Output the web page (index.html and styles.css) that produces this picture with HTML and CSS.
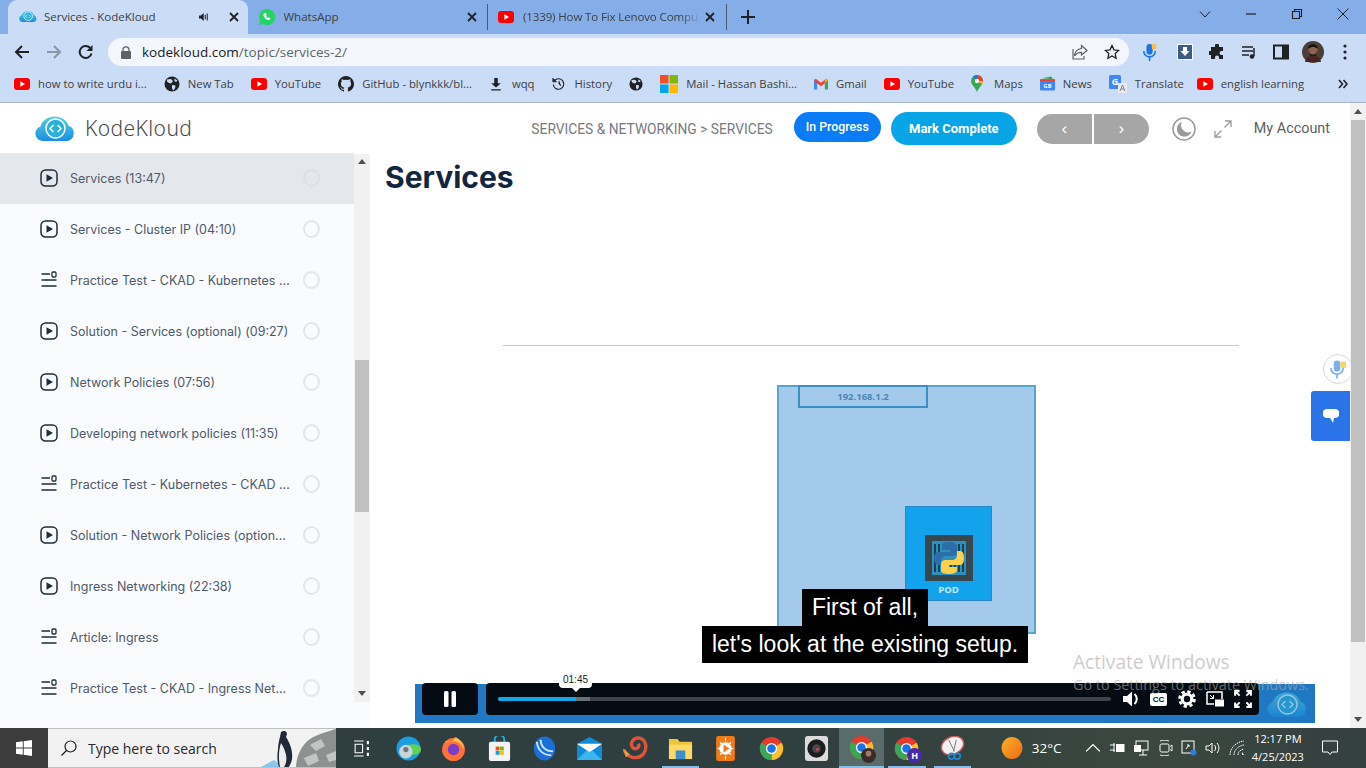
FILE: index.html
```html
<!DOCTYPE html>
<html lang="en">
<head>
<meta charset="utf-8">
<title>Services - KodeKloud</title>
<link rel="stylesheet" href="styles.css">
</head>
<body>
<svg class="defs" width="0" height="0" aria-hidden="true">
  <defs>
    <linearGradient id="cloudg" x1="0" y1="0" x2="0" y2="1"><stop offset="0" stop-color="#55d3dc"/><stop offset="1" stop-color="#1a8ee2"/></linearGradient>
    <symbol id="yt" viewBox="0 0 16 16"><rect x="0" y="2" width="16" height="12" rx="3" fill="#f00"/><path d="M6.4 5.2 11 8l-4.600 2.800z" fill="#fff"/></symbol>
    <symbol id="globe" viewBox="0 0 16 16"><circle cx="8" cy="8" r="7.500" fill="#202124"/><path d="M3 3.500 7 3l2 2-2 2.500L4.500 6.800 3 5.500zM8 9l3.500.5L11 12.500l-2 2-1-2.500zM10.500 2.500l3 2-1.500 1.500-1.500-1z" fill="#cbdcf6"/></symbol>
    <symbol id="play" viewBox="0 0 18 18"><rect x="1" y="1" width="16" height="16" rx="4.500" fill="none" stroke="#1f2d3d" stroke-width="1.500"/><path d="M6.500 5.200 13 9l-6.500 3.800z" fill="#1f2d3d"/></symbol>
    <symbol id="lines" viewBox="0 0 18 18"><path d="M1.500 3h8.500M1.500 9h15M1.500 15h15" fill="none" stroke="#1f2d3d" stroke-width="1.300"/><rect x="12" y="1" width="4" height="5" rx="1" fill="none" stroke="#1f2d3d" stroke-width="1.300"/></symbol>
    <symbol id="chrome" viewBox="0 0 28 28"><circle cx="14" cy="14" r="13" fill="#e33b2e"/><path d="M14 14 25.300 7.500A13 13 0 0 1 14 27z" fill="#fbc02d"/><path d="M14 14 14 27A13 13 0 0 1 2.700 7.500z" fill="#3aa757"/><circle cx="14" cy="14" r="6.200" fill="#fff"/><circle cx="14" cy="14" r="4.800" fill="#1a73e8"/></symbol>
    <symbol id="cloud" viewBox="0 0 40 26"><path d="M8 25a7.500 7.500 0 0 1-2.500-14.600C7 4.500 13 .5 20 .5c6 0 11.500 3.500 13.300 9A8 8 0 0 1 32 25z" fill="url(#cloudg)"/><circle cx="20.500" cy="12.500" r="9.500" fill="#2cb0dc" stroke="#fff" stroke-width="1.500"/><path d="m18.500 9-3.500 3.500 3.500 3.500M22.500 9l3.500 3.500-3.500 3.500" fill="none" stroke="#fff" stroke-width="1.400"/></symbol>
  </defs>
</svg>

<header class="tabstrip">
  <div class="tab tab-active">
    <svg class="fav" viewBox="0 0 40 26"><use href="#cloud"/></svg>
    <span class="tab-title">Services - KodeKloud</span>
    <svg class="tab-audio" viewBox="0 0 14 12"><path d="M0 4h2.500L6 1v10L2.500 8H0z" fill="#202124"/><path d="M8 3v6M10.500 1.500v9" stroke="#202124" stroke-width="1.300"/></svg>
    <svg class="tab-x" viewBox="0 0 10 10"><path d="m1 1 8 8M9 1 1 9" stroke="#202124" stroke-width="1.800"/></svg>
  </div>
  <div class="tab">
    <svg class="fav fav-big" viewBox="0 0 18 18"><path d="M9 1a8 8 0 0 0-6.900 12L1 17l4.200-1.100A8 8 0 1 0 9 1z" fill="#25d366"/><path d="M6.300 5c-1.500 1-1 3 .8 5s3.600 2.600 4.900 1.500l.5-1.300-2-1-.8.800C9.400 9.600 8.400 8.600 8 7.500l.7-.8-.9-2z" fill="#fff"/></svg>
    <span class="tab-title">WhatsApp</span>
    <svg class="tab-x tab-x-solo" viewBox="0 0 10 10"><path d="m1 1 8 8M9 1 1 9" stroke="#202124" stroke-width="1.800"/></svg>
  </div>
  <div class="tab tab-sep">
    <svg class="fav fav-yt"><use href="#yt"/></svg>
    <span class="tab-title tab-fade">(1339) How To Fix Lenovo Compu</span>
    <svg class="tab-x tab-x-fade" viewBox="0 0 10 10"><path d="m1 1 8 8M9 1 1 9" stroke="#202124" stroke-width="1.800"/></svg>
  </div>
  <svg class="tab-plus" viewBox="0 0 14 14"><path d="M7 0v14M0 7h14" stroke="#202124" stroke-width="2"/></svg>
  <div class="winctl">
    <svg viewBox="0 0 12 12"><path d="m1 3.500 5 5.500 5-5.500" fill="none" stroke="#202124"/></svg>
    <svg viewBox="0 0 12 12"><path d="M1 6h10" stroke="#202124" stroke-width="1.200"/></svg>
    <svg viewBox="0 0 12 12"><path d="M1.500 3.500h7v7h-7zM3.500 3.500v-2h7v7h-2" fill="none" stroke="#202124" stroke-width="1.100"/></svg>
    <svg viewBox="0 0 12 12"><path d="m.5.500 11 11M11.500.500l-11 11" stroke="#202124"/></svg>
  </div>
</header>

<nav class="toolbar">
  <svg class="nav-ico" viewBox="0 0 16 16"><path d="M15 8H2M8 2 2 8l6 6" fill="none" stroke="#202124" stroke-width="2"/></svg>
  <svg class="nav-ico" viewBox="0 0 16 16"><path d="M1 8h13M8 2l6 6-6 6" fill="none" stroke="#8a95a5" stroke-width="2"/></svg>
  <svg class="nav-ico" viewBox="0 0 16 16"><path d="M13.500 9.500A6 6 0 1 1 12 3.800" fill="none" stroke="#202124" stroke-width="2"/><path d="M14.500 1v6h-6z" fill="#202124"/></svg>
  <div class="omnibox">
    <svg class="lock" viewBox="0 0 10 13"><path d="M2 5.500V3.800a3 3 0 0 1 6 0v1.700" fill="none" stroke="#5f6368" stroke-width="1.300"/><rect y="5" width="10" height="8" rx="1" fill="#5f6368"/></svg>
    <span class="url">kodekloud.com<span class="url-path">/topic/services-2/</span></span>
    <svg class="omni-ico" viewBox="0 0 16 16"><path d="M9.500 1.500 15 6.500 9.500 11V8.300C6 8.300 4 9.500 2.500 12c.3-4 2.700-7 7-7.500z" fill="none" stroke="#5f6368" stroke-width="1.200"/><path d="M1 5v10h11v-3" fill="none" stroke="#5f6368" stroke-width="1.200"/></svg>
    <svg class="omni-ico omni-last" viewBox="0 0 16 16"><path d="m8 1.500 2 4.300 4.700.6-3.500 3.200.9 4.700L8 12l-4.100 2.300.9-4.700L1.300 6.400 6 5.800z" fill="none" stroke="#202124" stroke-width="1.300"/></svg>
  </div>
  <svg class="ext ext-mic" viewBox="0 0 18 20"><rect x="5" y="1" width="7" height="12" rx="3.500" fill="#1a73e8"/><path d="M2 9a6.500 6.500 0 0 0 13 0M8.500 15.500V20" fill="none" stroke="#1a73e8" stroke-width="1.800"/><rect x="11" y="1" width="5" height="6" rx="1.500" fill="#fbc02d"/></svg>
  <svg class="ext ext-first" viewBox="0 0 16 16"><rect x=".5" y=".5" width="15" height="15" fill="#3c5a8a" stroke="#fff"/><path d="M6 3h4v4h2.500L8 12 3.500 7H6z" fill="#fff"/></svg>
  <svg class="ext" viewBox="0 0 16 16"><path d="M6 1.500a2 2 0 0 1 4 0V3h4v4h-1.500a2 2 0 0 0 0 4H14v4h-4v-1.500a2 2 0 0 0-4 0V15H2v-4H.5a2 2 0 0 1 0-4H2V3h4z" fill="#202124"/></svg>
  <svg class="ext" viewBox="0 0 16 16"><path d="M1 3h11M1 7h11M1 11h7" stroke="#202124" stroke-width="1.500"/><path d="M13 4v8" stroke="#202124" stroke-width="1.500"/><circle cx="11" cy="12.500" r="2.300" fill="#202124"/></svg>
  <svg class="ext" viewBox="0 0 16 16"><rect x="1" y="1.500" width="14" height="13" fill="none" stroke="#202124" stroke-width="2"/><rect x="9" y="1.500" width="6" height="13" fill="#202124"/></svg>
  <svg class="avatar" viewBox="0 0 22 22"><circle cx="11" cy="11" r="11" fill="#4a4038"/><circle cx="11" cy="9" r="4.500" fill="#8a6450"/><path d="M6 7c1-5 9-5 10 0l-1 .5c-2-2-6-2-8 0z" fill="#17110e"/><path d="M7 10c1 5 7 5 8 0l-1 5H8z" fill="#251a16"/><path d="M3 21c1-5 4-6 8-6s7 1 8 6z" fill="#4a2423"/></svg>
  <svg class="ext ext-menu" viewBox="0 0 4 16"><circle cx="2" cy="2" r="1.600" fill="#202124"/><circle cx="2" cy="8" r="1.600" fill="#202124"/><circle cx="2" cy="14" r="1.600" fill="#202124"/></svg>
</nav>

<div class="bookmarks">
  <span class="bm"><svg class="bm-ico"><use href="#yt"/></svg>how to write urdu i...</span>
  <span class="bm"><svg class="bm-ico"><use href="#globe"/></svg>New Tab</span>
  <span class="bm"><svg class="bm-ico"><use href="#yt"/></svg>YouTube</span>
  <span class="bm"><svg class="bm-ico" viewBox="0 0 16 16"><path d="M8 0a8 8 0 0 0-2.500 15.600c.4 0 .5-.2.500-.4v-1.400c-2.200.5-2.700-1-2.700-1-.4-1-.9-1.200-.9-1.200-.7-.5 0-.5 0-.5.800 0 1.200.8 1.200.8.700 1.200 1.900.9 2.400.7 0-.5.300-.9.500-1.100-1.800-.2-3.600-.9-3.600-4 0-.9.300-1.600.8-2.100 0-.2-.4-1 .1-2.100 0 0 .7-.2 2.200.8a7.500 7.500 0 0 1 4 0c1.500-1 2.200-.8 2.200-.8.400 1.100.2 1.900.1 2.100.5.500.8 1.200.8 2.100 0 3.100-1.900 3.800-3.600 4 .3.200.5.700.5 1.500v2.200c0 .2.100.4.500.4A8 8 0 0 0 8 0z" fill="#202124"/></svg>GitHub - blynkkk/bl...</span>
  <span class="bm bm-tight"><svg class="bm-ico bm-small" viewBox="0 0 14 16"><path d="M5 1h4v6h3.500L7 12 1.500 7H5zM1.500 14h11v1.500h-11z" fill="#202124"/></svg>wqq</span>
  <span class="bm bm-tight"><svg class="bm-ico bm-small" viewBox="0 0 16 16"><path d="M3 4a6 6 0 1 1-1.500 4.500" fill="none" stroke="#202124" stroke-width="1.300"/><path d="M1 1.500v4h4zM8 4.500V8l2.500 2" fill="#202124" stroke="#202124"/></svg>History</span>
  <span class="bm"><svg class="bm-ico bm-small"><use href="#globe"/></svg></span>
  <span class="bm"><svg class="bm-ico bm-ms" viewBox="0 0 18 18"><rect width="8.500" height="8.500" fill="#f25022"/><rect x="9.500" width="8.500" height="8.500" fill="#7fba00"/><rect y="9.500" width="8.500" height="8.500" fill="#00a4ef"/><rect x="9.500" y="9.500" width="8.500" height="8.500" fill="#ffb900"/></svg>Mail - Hassan Bashi...</span>
  <span class="bm"><svg class="bm-ico bm-small" viewBox="0 0 16 12"><path d="M0 1.500V12h3.500V5L8 8.500 12.500 5v7H16V1.500L14 0 8 4.500 2 0z" fill="#ea4335"/><path d="M0 1.500V12h3.500V5z" fill="#4285f4"/><path d="M12.500 5v7H16V1.500z" fill="#34a853"/><path d="m14 0 2 1.500-3.500 3.500V2z" fill="#fbbc04"/></svg>Gmail</span>
  <span class="bm"><svg class="bm-ico"><use href="#yt"/></svg>YouTube</span>
  <span class="bm bm-maps"><svg class="bm-ico bm-map" viewBox="0 0 12 17"><path d="M6 0a6 6 0 0 1 6 6c0 3.500-4 6-6 11C4 12 0 9.500 0 6a6 6 0 0 1 6-6z" fill="#34a853"/><path d="M2 1.500A6 6 0 0 1 6 0v6z" fill="#1a73e8"/><path d="M6 0a6 6 0 0 1 6 6H6z" fill="#ea4335"/><path d="M12 6c0 1-.5 2-1 3L6 6z" fill="#fbbc04"/><circle cx="6" cy="6" r="2.200" fill="#fff"/></svg>Maps</span>
  <span class="bm"><svg class="bm-ico bm-news" viewBox="0 0 16 15"><path d="M2 2 12 0l2 3z" fill="#34a853"/><rect y="3" width="16" height="12" rx="1.500" fill="#4285f4"/><rect x="0" y="3" width="16" height="2.500" fill="#ea4335"/><text x="8" y="12.500" class="news-txt">GB</text></svg>News</span>
  <span class="bm bm-translate"><svg class="bm-ico bm-tr" viewBox="0 0 18 18"><rect width="12" height="14" rx="1.500" fill="#4285f4"/><text x="6" y="10" class="tr-txt">G</text><path d="M9 8h9v10H9z" fill="#e8eaed"/><path d="m11 16 2.500-6 2.500 6M12 14h3" fill="none" stroke="#80868b"/></svg>Translate</span>
  <span class="bm"><svg class="bm-ico"><use href="#yt"/></svg>english learning</span>
  <svg class="bm-more" viewBox="0 0 10 10"><path d="m1 1 3.500 4L1 9M5.500 1 9 5 5.500 9" fill="none" stroke="#202124" stroke-width="1.600"/></svg>
</div>

<div class="app">
  <div class="app-main">
    <div class="site-head">
      <svg class="logo"><use href="#cloud"/></svg>
      <span class="brand">KodeKloud</span>
      <span class="crumb">SERVICES &amp; NETWORKING &gt; SERVICES</span>
      <button class="btn-progress">In Progress</button>
      <button class="btn-complete">Mark Complete</button>
      <div class="pager">
        <span class="page-btn">&#8249;</span>
        <span class="page-btn">&#8250;</span>
      </div>
      <svg class="moon" viewBox="0 0 24 24"><circle cx="12" cy="12" r="11" fill="none" stroke="#9a9a9a" stroke-width="1.500"/><path d="M10 5a7.500 7.500 0 1 0 9.500 9.500A7 7 0 0 1 10 5z" fill="#9a9a9a"/></svg>
      <svg class="expand" viewBox="0 0 18 18"><path d="M11 1h6v6M17 1 10.500 7.500M7 17H1v-6M1 17l6.500-6.500" fill="none" stroke="#9a9a9a" stroke-width="1.300"/></svg>
      <span class="account">My Account</span>
    </div>
    <div class="body-row">
      <aside class="sidebar">
        <div class="lessons">
          <div class="lesson lesson-current"><svg class="l-ico"><use href="#play"/></svg><span class="l-name">Services (13:47)</span><i class="radio"></i></div>
          <div class="lesson"><svg class="l-ico"><use href="#play"/></svg><span class="l-name">Services - Cluster IP (04:10)</span><i class="radio"></i></div>
          <div class="lesson"><svg class="l-ico"><use href="#lines"/></svg><span class="l-name">Practice Test - CKAD - Kubernetes ...</span><i class="radio"></i></div>
          <div class="lesson"><svg class="l-ico"><use href="#play"/></svg><span class="l-name">Solution - Services (optional) (09:27)</span><i class="radio"></i></div>
          <div class="lesson"><svg class="l-ico"><use href="#play"/></svg><span class="l-name">Network Policies (07:56)</span><i class="radio"></i></div>
          <div class="lesson"><svg class="l-ico"><use href="#play"/></svg><span class="l-name">Developing network policies (11:35)</span><i class="radio"></i></div>
          <div class="lesson"><svg class="l-ico"><use href="#lines"/></svg><span class="l-name">Practice Test - Kubernetes - CKAD ...</span><i class="radio"></i></div>
          <div class="lesson"><svg class="l-ico"><use href="#play"/></svg><span class="l-name">Solution - Network Policies (option...</span><i class="radio"></i></div>
          <div class="lesson"><svg class="l-ico"><use href="#play"/></svg><span class="l-name">Ingress Networking (22:38)</span><i class="radio"></i></div>
          <div class="lesson"><svg class="l-ico"><use href="#lines"/></svg><span class="l-name">Article: Ingress</span><i class="radio"></i></div>
          <div class="lesson"><svg class="l-ico"><use href="#lines"/></svg><span class="l-name">Practice Test - CKAD - Ingress Net...</span><i class="radio"></i></div>
        </div>
        <div class="side-scroll">
          <div class="track">
            <span class="arr-up"></span>
            <span class="thumb"></span>
            <span class="arr-down"></span>
          </div>
        </div>
      </aside>
      <main class="content">
        <h1 class="title">Services</h1>
        <div class="video">
          <hr class="slide-rule">
          <div class="node-box">
            <div class="ip-box">192.168.1.2</div>
            <div class="pod">
              <svg class="py" viewBox="0 0 48 46">
                <rect width="48" height="46" fill="#37474f"/>
                <rect x="7" y="6" width="34" height="34" fill="#2c91bd"/>
                <path d="M10 9v28M14 9v28M34 9v28M38 9v28M18 30v7M22 30v7M26 30v7M30 30v7M18 9v5M30 9v5" stroke="#16384a" stroke-width="1.800"/>
                <path d="M24 7c-6 0-7 2-7 4v4h8v2H13c-3 0-4 3-4 6s1 7 4 7h3v-4c0-3 2-5 5-5h7c2 0 4-2 4-4v-6c0-2-3-4-8-4z" fill="#2e6ea8"/>
                <path d="M32 16v4c0 3-2 5-5 5h-7c-2 0-4 2-4 4v6c0 3 3 4 8 4 6 0 8-2 8-4v-3h-8v-2h11c3 0 4-3 4-7s-1-7-4-7z" fill="#fbd04c"/>
              </svg>
              <span class="pod-label">POD</span>
            </div>
          </div>
          <div class="captions">
            <span class="cap">First of all,</span>
            <span class="cap">let's look at the existing setup.</span>
          </div>
          <div class="player">
            <div class="ctl-pause"><svg viewBox="0 0 14 16"><rect x="1" width="4.500" height="16" rx="1.500" fill="#fff"/><rect x="8.500" width="4.500" height="16" rx="1.500" fill="#fff"/></svg></div>
            <div class="ctl-main">
              <div class="bar"><span class="bar-played"></span><span class="bar-buffer"></span>
                <span class="time-tip">01:45</span>
              </div>
              <svg class="pl-ico" viewBox="0 0 18 18"><path d="M1 6h4l5-4.500v15L5 12H1z" fill="#fff"/><path d="M12.500 4c3 2.500 3 7.500 0 10" fill="none" stroke="#fff" stroke-width="2"/></svg>
              <span class="cc">CC</span>
              <svg class="pl-ico" viewBox="0 0 18 18"><circle cx="9" cy="9" r="4.800" fill="none" stroke="#fff" stroke-width="3.200"/><circle cx="9" cy="9" r="7.500" fill="none" stroke="#fff" stroke-width="2.600" stroke-dasharray="3.300 2.600"/></svg>
              <svg class="pl-ico" viewBox="0 0 18 16"><path d="M1 1h15v7M8 13H1V1" fill="none" stroke="#fff" stroke-width="1.500"/><rect x="9" y="8.500" width="9" height="7" fill="#fff"/><path d="m4 4 3.500 3.500M4 7.500h3.500V4" fill="none" stroke="#fff"/></svg>
              <svg class="pl-ico" viewBox="0 0 16 16"><path d="M1 5V1h4M1 1l4 4M11 1h4v4M15 1l-4 4M1 11v4h4M1 15l4-4M15 11v4h-4M15 15l-4-4" fill="none" stroke="#fff" stroke-width="1.800"/></svg>
            </div>
            <svg class="pl-logo"><use href="#cloud"/></svg>
          </div>
        </div>
      </main>
    </div>
    <div class="float-mic"><svg viewBox="0 0 18 20"><rect x="5" y="1" width="7" height="12" rx="3.500" fill="#7ab0ee"/><path d="M2 9a6.500 6.500 0 0 0 13 0M8.500 15.500V20" fill="none" stroke="#7ab0ee" stroke-width="1.800"/><rect x="12" y="2" width="6" height="7" rx="1.500" fill="#f6d765"/></svg></div>
    <div class="float-fb"><svg viewBox="0 0 16 14"><path d="M4 0h8a4 4 0 0 1 0 9h-1l-1 5-3-5H4A4 4 0 0 1 4 0z" fill="#fff"/></svg></div>
    <div class="watermark">
      <div class="wm-big">Activate Windows</div>
      <div class="wm-small">Go to Settings to activate Windows.</div>
    </div>
  </div>
  <div class="page-scroll">
    <span class="arr-up"></span>
    <span class="thumb"></span>
    <span class="arr-down"></span>
  </div>
</div>

<footer class="taskbar">
  <div class="start"><svg viewBox="0 0 16 16"><path d="M0 2.300 6.800 1.300V7.500H0zM7.700 1.200 16 0v7.500H7.700zM0 8.500h6.800v6.200L0 13.700zM7.700 8.500H16V16l-8.300-1.200z" fill="#fff"/></svg></div>
  <div class="search">
    <svg class="s-ico" viewBox="0 0 16 16"><circle cx="9.500" cy="6.500" r="5.500" fill="none" stroke="#202020" stroke-width="1.200"/><path d="M5.500 10.500 .5 15.500" stroke="#202020" stroke-width="1.200"/></svg>
    <span class="s-text">Type here to search</span>
    <svg class="s-art" viewBox="0 0 82 40"><path d="M82 0v40H42C42 26 48 16 56 10 64 5 72 3 82 0z" fill="#8e9190"/><path d="M56 16l11-6 4 7-9 5zM50 29l12-5 3 8-11 5zM72 26l10-4v9l-7 2z" fill="#c3c5c4"/><path d="M3 40 20 31 32 40z" fill="#8fc4ea"/><path d="M27 3c3-2 6-1 6 2l-1 3c4 6 7 14 6 22-1 5-3 9-6 10h-6c-3-5-3-13-2-20 0-6 2-11 3-17z" fill="#20283a"/><path d="M27 14c-2 6-3 14-1 24h4c2-3 3-7 2-12-1-5-3-9-5-12z" fill="#ececea"/></svg>
  </div>
  <div class="tb-apps">
    <span class="tb tb-view"><svg viewBox="0 0 16 16"><path d="M1 1h9M1 15h9M2 4h7v8H2z" fill="none" stroke="#fff"/><path d="M13 1h2v3h-2zM13 6.500h2v3h-2zM13 12h2v3h-2z" fill="#fff"/></svg></span>
    <span class="tb"><svg viewBox="0 0 24 24"><circle cx="12" cy="12" r="11.500" fill="#1b9de2"/><path d="M24 13c0 4-4 5-7 5-5 0-8-3-7-7 1-3 4-3 6-3 4 0 8 1 8 5z" fill="#5fd05a"/><circle cx="9.500" cy="15" r="6.500" fill="#c9d4d8"/><circle cx="9.500" cy="13" r="2.500" fill="#6b7a80"/></svg></span>
    <span class="tb"><svg viewBox="0 0 24 24"><circle cx="12" cy="13" r="11" fill="#ff7139"/><path d="M3 6c3-2 4 0 6 0 3-2 5-5 5-5 5 3 8 7 8 12-3-7-8-8-10-8z" fill="#ffbd4f"/><circle cx="12" cy="13" r="5.500" fill="#7a3dc8"/></svg></span>
    <span class="tb"><svg viewBox="0 0 24 26"><path d="M7 7V4a5 5 0 0 1 10 0v3" fill="none" stroke="#25b0d8" stroke-width="2"/><rect x="1" y="6" width="22" height="20" rx="2" fill="#f3f3f3"/><rect x="8" y="11" width="4" height="4" fill="#f25022"/><rect x="12.500" y="11" width="4" height="4" fill="#7fba00"/><rect x="8" y="15.500" width="4" height="4" fill="#00a4ef"/><rect x="12.500" y="15.500" width="4" height="4" fill="#ffb900"/></svg></span>
    <span class="tb"><svg viewBox="0 0 24 26"><ellipse cx="12" cy="13" rx="11" ry="12.500" fill="#1d6fd8"/><path d="M4 6c1 8 6 14 15 14M8 4c0 7 5 12 13 12" fill="none" stroke="#cfe8fb" stroke-width="2"/></svg></span>
    <span class="tb"><svg viewBox="0 0 26 24"><path d="M13 0 26 7v17H0V7z" fill="#0f8bd8"/><path d="M0 7h26L13 16z" fill="#fff"/><path d="M0 24l10-10 3 2 3-2 10 10z" fill="#3cb4ee"/></svg></span>
    <span class="tb"><svg viewBox="0 0 26 24"><path d="M1 13c3 9 14 11 20 5 5-6 3-16-5-17-6 0-9 6-6 10 3 3 8 0 6-4" fill="none" stroke="#e0533c" stroke-width="3.500"/><path d="M0 12l7 6-4 3z" fill="#f29a3c"/></svg></span>
    <span class="tb tb-open"><svg viewBox="0 0 26 24"><path d="M1 2h9l2 3h13v18H1z" fill="#f0c33c"/><rect x="1" y="8" width="24" height="15" fill="#ffd966"/><rect x="8" y="14" width="10" height="9" fill="#3e8ecd"/></svg></span>
    <span class="tb"><svg viewBox="0 0 24 32"><rect width="24" height="32" rx="3" fill="#f07b16"/><circle cx="12" cy="16" r="8" fill="#fff"/><path d="M9.500 11 17 16l-7.500 5z" fill="#f07b16"/><path d="M12 2v4M12 26v4M2 16h3M19 16h3M5 8l3 3M19 8l-3 3M5 24l3-3M19 24l-3-3" stroke="#fff" stroke-width="1.500"/></svg></span>
    <span class="tb"><svg><use href="#chrome"/></svg></span>
    <span class="tb"><svg viewBox="0 0 24 26"><rect width="24" height="26" rx="3" fill="#dcdcdc"/><circle cx="12" cy="13" r="9.500" fill="#1d1d1f"/><circle cx="12" cy="13" r="4.500" fill="#49454a"/><circle cx="13" cy="14" r="1.500" fill="#d04848"/></svg></span>
    <span class="tb tb-active"><svg><use href="#chrome"/></svg><svg class="tb-badge" viewBox="0 0 16 16"><circle cx="8" cy="8" r="8" fill="#3a2c2a"/><circle cx="8" cy="6" r="3" fill="#a57a62"/></svg></span>
    <span class="tb tb-open"><svg><use href="#chrome"/></svg><span class="tb-h">H</span></span>
    <span class="tb tb-open"><svg viewBox="0 0 26 26"><ellipse cx="13" cy="10" rx="12" ry="9" transform="rotate(-25 13 10)" fill="#f1f1f1" stroke="#c8585a" stroke-width="1.500"/><path d="M9 4l6 12M17 4l-3 12" stroke="#777"/><circle cx="12" cy="21" r="3" fill="none" stroke="#1f8ad0" stroke-width="1.800"/><circle cx="18" cy="21" r="3" fill="none" stroke="#1f8ad0" stroke-width="1.800"/></svg></span>
  </div>
  <svg class="weather" viewBox="0 0 22 26"><defs><linearGradient id="sun" x1="0" y1="0" x2="1" y2="1"><stop offset="0" stop-color="#fbb02a"/><stop offset="1" stop-color="#ec6b14"/></linearGradient></defs><ellipse cx="11" cy="13" rx="10.500" ry="11" fill="url(#sun)"/></svg>
  <span class="temp">32°C</span>
  <div class="tray">
    <svg viewBox="0 0 14 14"><path d="m1 10 6-6 6 6" fill="none" stroke="#fff" stroke-width="1.100"/></svg>
    <svg viewBox="0 0 16 14"><path d="M1 4h5M1 9h5M5 2v9" stroke="#fff"/><rect x="7" y="3" width="8.500" height="8" fill="#fff"/></svg>
    <svg viewBox="0 0 16 16"><rect x="3" y="1" width="12" height="9" fill="none" stroke="#fff"/><rect x="1" y="5" width="7" height="7" fill="#fff"/><path d="M6 15h8M10 10v5" stroke="#fff"/></svg>
    <svg viewBox="0 0 16 16"><rect x="3" y="4" width="9" height="8" rx="1.500" fill="none" stroke="#fff"/><path d="M13 6.500 15 5v6l-2-1.500M3 1c3-1 6-1 9 0M3 15c3 1 6 1 9 0" fill="none" stroke="#fff" stroke-width=".9"/></svg>
    <svg viewBox="0 0 16 16"><rect x="1" y="1" width="12" height="12" fill="none" stroke="#fff"/><path d="M5 9l3-4M6 5h2v2" fill="none" stroke="#fff"/><circle cx="12.500" cy="12.500" r="3" fill="#2d7fd3"/></svg>
    <svg viewBox="0 0 16 16"><path d="M1 6h3l3-3v10l-3-3H1z" fill="none" stroke="#fff"/><path d="M9.500 5c1.500 2 1.500 4 0 6M12 3c2.500 3 2.500 7 0 10" fill="none" stroke="#fff"/></svg>
    <svg viewBox="0 0 16 16"><path d="M1 15C1 8 7 2 15 1M5 15c0-5 4-9 10-10M9 15c0-3 2-5 6-6" fill="none" stroke="#fff" stroke-dasharray="1.500 .8"/><path d="M13 15v-3l2 3z" fill="#fff"/></svg>
  </div>
  <div class="clock"><span>12:17 PM</span><span>4/25/2023</span></div>
  <svg class="notify" viewBox="0 0 16 16"><path d="M.5 1h15v11H10l-2 2.500L6 12H.5z" fill="none" stroke="#fff"/></svg>
</footer>
</body>
</html>
```

FILE: styles.css
```css
* { box-sizing: border-box; }
html, body { margin: 0; padding: 0; }
body {
  width: 1366px;
  height: 768px;
  overflow: hidden;
  display: flex;
  flex-direction: column;
  background: #fff;
  font-family: "Open Sans", "Noto Sans", sans-serif;
}
.defs { position: absolute; }
button { border: 0; font-family: inherit; padding: 0; }

/* tab strip */
.tabstrip { height: 34px; flex: none; background: #85ade8; display: flex; padding-left: 8px; align-items: stretch; color: #202124; }
.tab { width: 239.500px; display: flex; align-items: center; padding: 0 9px 1px 10px; font-size: 11.500px; position: relative; }
.tab-active { background: #cbdcf6; border-radius: 9px 9px 0 0; padding-left: 11px; }
.tab-sep { border-left: 1px solid #4a5a70; border-right: 1px solid #4a5a70; height: 26px; align-self: center; }
.fav { width: 18px; height: 13px; flex: none; margin-right: 7px; }
.fav-big { height: 18px; margin-right: 8px; }
.fav-yt { width: 16px; height: 16px; margin-right: 9px; }
.tab-title { flex: 1; white-space: nowrap; overflow: hidden; color: #3c4043; }
.tab-fade { letter-spacing: -.12px; -webkit-mask-image: linear-gradient(90deg, #000 88%, transparent); mask-image: linear-gradient(90deg, #000 88%, transparent); }
.tab-audio { width: 11px; height: 10px; margin-right: 11px; }
.tab-x { width: 10px; height: 10px; flex: none; margin-left: 8px; }
.tab-x-solo { margin-right: 1px; }
.tab-x-fade { margin: 0 2px 0 4px; }
.tab-plus { width: 14px; height: 14px; align-self: center; margin-left: 14px; }
.winctl { margin-left: auto; display: flex; align-items: center; padding: 0 17px 6px 0; gap: 34px; }
.winctl svg { width: 12px; height: 12px; }

/* toolbar */
.toolbar { height: 34px; flex: none; background: #cbdcf6; display: flex; align-items: center; padding: 2px 0 0 14px; }
.nav-ico { width: 16px; height: 16px; margin-right: 16px; flex: none; }
.omnibox { width: 1021px; height: 28px; margin-left: -2px; background: #f3f7fd; border-radius: 14px; display: flex; align-items: center; padding-left: 13px; }
.lock { width: 10px; height: 13px; flex: none; margin-right: 11px; }
.url { font-size: 13.500px; color: #202124; flex: 1; }
.url-path { color: #5f6368; }
.omni-ico { width: 16px; height: 16px; margin-right: 16px; flex: none; }
.omni-last { margin-right: 9px; }
.ext { width: 16px; height: 16px; margin-left: 16px; flex: none; }
.ext-mic { height: 20px; margin-left: 13px; }
.ext-first { margin-left: 19px; }
.avatar { width: 22px; height: 22px; margin-left: 13px; flex: none; }
.ext-menu { width: 4px; margin-left: 19px; }

/* bookmarks */
.bookmarks { height: 35px; flex: none; background: #cbdcf6; border-bottom: 1px solid #a8b4c6; display: flex; align-items: center; padding: 0 18px 3px 14px; font-size: 11.300px; color: #3c4043; gap: 17px; white-space: nowrap; }
.bm { display: inline-flex; align-items: center; gap: 8px; }
.bm-ico { width: 16px; height: 16px; flex: none; }
.bm-small { width: 14px; height: 14px; }
.bm-tight { gap: 9px; }
.bm-maps { gap: 11px; }
.bm-translate { margin-right: -4px; }
.bm-ms { width: 18px; height: 18px; }
.bm-map { width: 12px; height: 17px; }
.bm-news { width: 15px; height: 15px; }
.bm-tr { width: 18px; height: 18px; }
.news-txt { font-size: 6px; fill: #fff; text-anchor: middle; font-weight: 700; }
.tr-txt { font-size: 9px; fill: #fff; text-anchor: middle; font-weight: 700; }
.bm-more { width: 10px; height: 10px; margin-left: auto; }

/* app */
.app { height: 625px; flex: none; display: flex; }
.app-main { flex: 1; min-width: 0; position: relative; display: flex; flex-direction: column; overflow: hidden; }
.site-head { height: 51px; flex: none; display: flex; align-items: center; padding: 0 20px 0 35px; background: #fff; }
.logo { width: 40px; height: 26px; flex: none; margin-right: 10px; }
.brand { font-family: "Noto Sans", sans-serif; font-size: 21px; font-weight: 300; letter-spacing: .4px; color: #4a4a4a; margin-top: -2px; }
.crumb { margin-left: auto; font-family: Roboto, sans-serif; font-size: 13.800px; color: #777b7f; margin-right: 21px; white-space: nowrap; }
.btn-progress { width: 87px; height: 30px; border-radius: 15px; background: #0a7cf5; color: #fff; font-family: Roboto, sans-serif; font-size: 12.300px; font-weight: 500; margin: -3px 10px 0 0; }
.btn-complete { width: 126px; height: 33px; border-radius: 17px; background: #07a5e6; color: #fff; font-family: Roboto, sans-serif; font-size: 13px; font-weight: 700; margin-right: 20px; }
.pager { display: flex; gap: 2px; margin: 1px 23px 0 0; }
.page-btn { width: 55px; height: 30px; background: #a6a6a6; color: #fff; display: flex; align-items: center; justify-content: center; font-size: 17px; font-family: "Liberation Sans", sans-serif; }
.page-btn:first-child { border-radius: 15px 0 0 15px; }
.page-btn:last-child { border-radius: 0 15px 15px 0; }
.moon { width: 24px; height: 24px; margin-right: 18px; flex: none; }
.expand { width: 18px; height: 18px; margin-right: 22px; flex: none; }
.account { font-family: Roboto, sans-serif; font-size: 14.400px; color: #5b5f63; white-space: nowrap; }

.body-row { flex: 1; min-height: 0; display: flex; }
.sidebar { width: 370px; flex: none; display: flex; background: #fafbfd; }
.lessons { width: 354px; flex: none; margin-top: -1px; font-family: Inter, sans-serif; font-size: 12.500px; color: #4e5a6b; }
.lesson { height: 51px; display: flex; align-items: center; padding: 0 34px 0 40px; }
.lesson-current { background: #e4e8ed; }
.lesson-current .radio { border-color: #dcdfe3; }
.l-ico { width: 18px; height: 18px; flex: none; margin: 0 12px 1px 0; }
.l-name { flex: 1; white-space: nowrap; overflow: hidden; }
.radio { width: 17px; height: 18px; border: 2px solid #e3e5e8; border-radius: 50%; flex: none; margin-bottom: 1px; }
.side-scroll { width: 16px; flex: none; }
.track { height: 548px; background: #f1f1f1; display: flex; flex-direction: column; align-items: center; }
.arr-up { width: 0; height: 0; border: 4px solid transparent; border-top: 0; border-bottom: 5px solid #505050; flex: none; }
.arr-down { width: 0; height: 0; border: 4px solid transparent; border-bottom: 0; border-top: 5px solid #505050; flex: none; }
.track .arr-up { margin-top: 5px; }
.track .thumb { width: 14px; height: 152px; margin-top: 196px; background: #c1c1c1; flex: none; }
.track .arr-down { margin-top: auto; margin-bottom: 6px; }

.content { flex: 1; min-width: 0; padding-left: 15px; background: #fff; }
.title { margin: 0 0 17px; height: 46px; line-height: 46px; font-family: Inter, sans-serif; font-size: 30px; font-weight: 700; color: #12263f; }
.video { width: 900px; height: 506px; margin-left: 30px; padding-top: 128px; position: relative; }
.slide-rule { width: 736px; height: 1px; margin: 0 0 39px 88px; border: 0; background: #c9c9c9; }
.node-box { width: 259px; height: 249px; margin-left: 362px; background: #a3caeb; border: 2px solid #5aa6c8; position: relative; }
.ip-box { position: absolute; left: 19px; top: -2px; width: 130px; height: 23px; border: 2px solid #3a8fc4; color: #4b86b8; font-family: "Open Sans", sans-serif; font-size: 9.500px; font-weight: 700; display: flex; align-items: center; justify-content: center; }
.pod { position: absolute; left: 126px; top: 119px; width: 87px; height: 95px; background: #12a3ec; border: 1px solid #2a86c4; display: flex; flex-direction: column; align-items: center; padding-top: 28px; }
.py { width: 48px; height: 46px; flex: none; }
.pod-label { font-family: "Open Sans", sans-serif; font-size: 9.500px; font-weight: 700; color: #c8e8fb; margin-top: 2px; }
.captions { position: absolute; left: 0; right: 0; bottom: 60px; display: flex; flex-direction: column; align-items: center; font-family: "Liberation Sans", sans-serif; font-size: 23px; color: #fff; }
.cap { background: #000; padding: 0 9.500px; height: 37px; line-height: 37px; white-space: nowrap; }
.player { position: absolute; left: 0; right: 0; bottom: 0; height: 39px; background: #1f78c1; padding: 0 8px 0 7px; display: flex; align-items: flex-start; }
.ctl-pause { width: 56px; height: 32px; margin-top: -1px; background: #040b12; border-radius: 4px; display: flex; align-items: center; justify-content: center; flex: none; }
.ctl-pause svg { width: 14px; height: 16px; }
.ctl-main { width: 773px; height: 32px; margin: -1px 0 0 8px; background: #040b12; border-radius: 4px; display: flex; align-items: center; padding: 0 7px 0 12px; flex: none; }
.bar { width: 613px; height: 4px; background: #3f444a; margin-right: 11px; display: flex; flex: none; position: relative; border-radius: 2px; }
.bar-played { width: 78px; background: #15a8e8; border-radius: 2px 0 0 2px; }
.bar-buffer { width: 14px; background: #6b7075; }
.time-tip { position: absolute; left: 61px; top: -26px; width: 33px; height: 17px; background: #fff; border-radius: 4px; color: #222; font-family: "Liberation Sans", sans-serif; font-size: 10px; display: flex; align-items: center; justify-content: center; }
.time-tip::after { content: ""; position: absolute; left: 13px; bottom: -4px; border: 4px solid transparent; border-bottom: 0; border-top-color: #fff; }
.pl-ico { width: 18px; height: 18px; flex: none; margin-right: 10px; }
.cc { width: 17px; height: 13px; background: #fff; color: #040b12; border-radius: 2px; font-family: "Liberation Sans", sans-serif; font-size: 8px; font-weight: 700; display: flex; align-items: center; justify-content: center; flex: none; margin-right: 11px; }
.pl-logo { width: 40px; height: 26px; flex: none; margin: 8px 0 0 8px; opacity: .55; }
.float-mic { position: absolute; left: 1323px; top: 251px; width: 30px; height: 30px; border-radius: 50%; background: #fff; border: 1px solid #d8d8d8; display: flex; align-items: center; padding-left: 5px; }
.float-mic svg { width: 17px; height: 20px; }
.float-fb { position: absolute; left: 1311px; top: 288px; width: 39px; height: 50px; background: #2a74e8; border-radius: 3px 0 0 3px; display: flex; align-items: center; justify-content: center; }
.float-fb svg { width: 16px; height: 14px; }
.watermark { position: absolute; left: 1073px; top: 547px; color: rgba(170, 170, 170, .6); white-space: nowrap; font-family: "Open Sans", sans-serif; }
.wm-big { font-size: 19.100px; line-height: 24px; }
.wm-small { font-size: 14.400px; line-height: 21px; }
.page-scroll { width: 16px; flex: none; background: #f1f1f1; display: flex; flex-direction: column; align-items: center; }
.page-scroll .arr-up { margin-top: 6px; }
.page-scroll .thumb { width: 14px; height: 522px; margin-top: 6px; background: #c1c1c1; flex: none; }
.page-scroll .arr-down { margin-top: auto; margin-bottom: 6px; }

/* taskbar */
.taskbar { height: 40px; flex: none; background: linear-gradient(90deg, #2f3f3f 55%, #3b483f 85%, #343f3f); display: flex; align-items: center; color: #fff; }
.start { width: 48px; height: 40px; background: #3c3c3c; display: flex; align-items: center; justify-content: center; flex: none; }
.start svg { width: 16px; height: 16px; }
.search { width: 288px; height: 40px; background: #f2f2f2; border-top: 1px solid #c0c0c0; border-bottom: 1px solid #c0c0c0; display: flex; align-items: center; padding-left: 13px; position: relative; flex: none; overflow: hidden; }
.s-ico { width: 16px; height: 16px; margin-right: 11px; }
.s-text { color: #2b2b2b; font-size: 14px; }
.s-art { position: absolute; right: 0; top: 0; width: 82px; height: 40px; }
.tb-apps { display: flex; height: 40px; flex: none; }
.tb { width: 45.300px; height: 40px; display: flex; align-items: center; justify-content: center; position: relative; flex: none; }
.tb svg { width: 25px; height: 25px; }
.tb-view { width: 50px; }
.tb-view svg { width: 17px; height: 17px; }
.tb-active { background: #5a6b6b; border-bottom: 2px solid #87bde8; }
.tb-open::after { content: ""; position: absolute; left: 4px; right: 4px; bottom: 0; height: 2px; background: #87bde8; }
.tb-active svg.tb-badge { position: absolute; width: 15px; height: 15px; left: 22px; top: 20px; }
.tb-h { position: absolute; left: 23px; top: 20px; width: 15px; height: 15px; border-radius: 50%; background: #4b2aa8; font-size: 9px; font-weight: 700; display: flex; align-items: center; justify-content: center; }
.weather { width: 24px; height: 26px; margin-left: 25px; flex: none; }
.temp { margin-left: 8px; font-size: 13.500px; width: 45px; flex: none; }
.tray { display: flex; align-items: center; gap: 8px; margin-left: 8px; flex: none; }
.tray svg { width: 16px; height: 16px; }
.clock { margin-left: 3px; width: 60px; display: flex; flex-direction: column; align-items: center; font-size: 11px; line-height: 18px; flex: none; }
.notify { width: 16px; height: 16px; margin-left: 14px; flex: none; }
```
